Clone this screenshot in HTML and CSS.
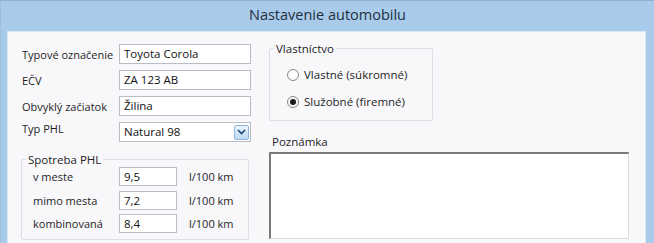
FILE: index.html
```html
<!DOCTYPE html>
<html lang="sk">
<head>
<meta charset="utf-8">
<title>Nastavenie automobilu</title>
<link rel="stylesheet" href="styles.css">
</head>
<body>
<div class="window">
  <div class="titlebar">Nastavenie automobilu</div>
  <div class="content">
    <div class="col-left">
      <div class="form">
        <label class="lbl">Typové označenie</label>
        <div class="input wide">Toyota Corola</div>
        <label class="lbl">EČV</label>
        <div class="input wide">ZA 123 AB</div>
        <label class="lbl">Obvyklý začiatok</label>
        <div class="input wide">Žilina</div>
        <label class="lbl lbl-top">Typ PHL</label>
        <div class="input wide select">
          <span>Natural 98</span>
          <span class="dd-btn"><svg width="9" height="6" viewBox="0 0 9 6"><path d="M1 1 L4.5 4.5 L8 1" fill="none" stroke="#1d3f6e" stroke-width="1.6"/></svg></span>
        </div>
      </div>
      <fieldset class="group consumption">
        <legend>Spotreba PHL</legend>
        <div class="crow"><span class="clbl">v meste</span><div class="input small">9,5</div><span class="unit">l/100 km</span></div>
        <div class="crow"><span class="clbl">mimo mesta</span><div class="input small">7,2</div><span class="unit">l/100 km</span></div>
        <div class="crow"><span class="clbl">kombinovaná</span><div class="input small">8,4</div><span class="unit">l/100 km</span></div>
      </fieldset>
    </div>
    <div class="col-right">
      <fieldset class="group ownership">
        <legend>Vlastníctvo</legend>
        <label class="radio"><span class="dot"></span>Vlastné (súkromné)</label>
        <label class="radio"><span class="dot checked"></span>Služobné (firemné)</label>
      </fieldset>
      <div class="note-label">Poznámka</div>
      <div class="textarea"></div>
    </div>
  </div>
</div>
</body>
</html>
```

FILE: styles.css
```css
html, body {
  margin: 0;
  padding: 0;
}
body {
  width: 654px;
  height: 243px;
  overflow: hidden;
  background: #a9cbeb;
  font-family: "Open Sans", "Noto Sans", sans-serif;
  font-size: 11px;
  color: #1e1e1e;
}
.window {
  height: 243px;
  box-sizing: border-box;
  border-top: 1px solid #8fb1d2;
  border-left: 1px solid #9dbfdf;
  background: #a9cbeb;
  overflow: hidden;
}
.titlebar {
  height: 30px;
  line-height: 28px;
  text-align: center;
  font-size: 14.5px;
  color: #1f2f40;
}
.content {
  margin: 0 8px 0 6px;
  height: 230px;
  box-sizing: border-box;
  background: #f8f8fb;
  border: 1px solid #dfe8f2;
  border-bottom: none;
  padding: 12px 0 0 13px;
  display: flex;
  gap: 17px;
}
.col-left {
  width: 231px;
}
.form {
  display: grid;
  grid-template-columns: 98px 132px;
  row-gap: 6px;
  align-items: center;
}
.lbl {
  padding-left: 1px;
}
.lbl-top {
  align-self: start;
  line-height: 14px;
}
.input {
  box-sizing: border-box;
  height: 20px;
  background: #fff;
  border: 1px solid #b9bdc6;
  padding: 0 4px;
  line-height: 18px;
  font-size: 11.5px;
  color: #111;
}
.select {
  display: flex;
  justify-content: space-between;
  align-items: center;
  padding-right: 1px;
}
.dd-btn {
  width: 15px;
  height: 15px;
  box-sizing: border-box;
  border: 1px solid #8fb6da;
  border-radius: 2px;
  background: linear-gradient(#eaf4fd, #bcdaf4);
  display: flex;
  align-items: center;
  justify-content: center;
}
.group {
  margin: 0;
  padding: 0;
  border: 1px solid #dcdfe3;
  border-radius: 2px;
  box-sizing: border-box;
}
.group legend {
  padding: 0 2px;
  margin-left: 4px;
  font-size: 11.5px;
}
.consumption {
  margin-top: 10px;
  width: 228px;
  height: 88px;
  padding-left: 11px;
  display: flex;
  flex-direction: column;
  gap: 4.5px;
}
.consumption legend {
  margin-left: -7px;
}
.crow {
  display: flex;
  align-items: center;
}
.clbl {
  width: 86px;
}
.small {
  width: 58px;
  height: 19px;
}
.unit {
  margin-left: 12px;
}
.col-right {
  width: 360px;
}
.ownership {
  margin-top: -3px;
  width: 164px;
  height: 80px;
  padding: 11px 0 0 17px;
  display: flex;
  flex-direction: column;
  gap: 12px;
}
.ownership legend {
  margin-left: -13px;
}
.radio {
  display: flex;
  align-items: center;
  gap: 5px;
  font-size: 11.5px;
}
.dot {
  width: 12px;
  height: 12px;
  box-sizing: border-box;
  border-radius: 50%;
  border: 1px solid #8a8a8a;
  background: radial-gradient(circle, #ffffff 40%, #eceef0 100%);
  display: inline-flex;
  align-items: center;
  justify-content: center;
}
.dot.checked::after {
  content: "";
  width: 6px;
  height: 6px;
  border-radius: 50%;
  background: #1b1b1b;
}
.note-label {
  margin-top: 13px;
  padding-left: 3px;
  font-size: 11.5px;
  height: 18px;
}
.textarea {
  width: 360px;
  height: 87px;
  box-sizing: border-box;
  background: #fff;
  border-top: 2px solid #7a7a7a;
  border-left: 2px solid #7a7a7a;
  border-right: 1px solid #dcdcdc;
  border-bottom: 1px solid #dcdcdc;
}
```
